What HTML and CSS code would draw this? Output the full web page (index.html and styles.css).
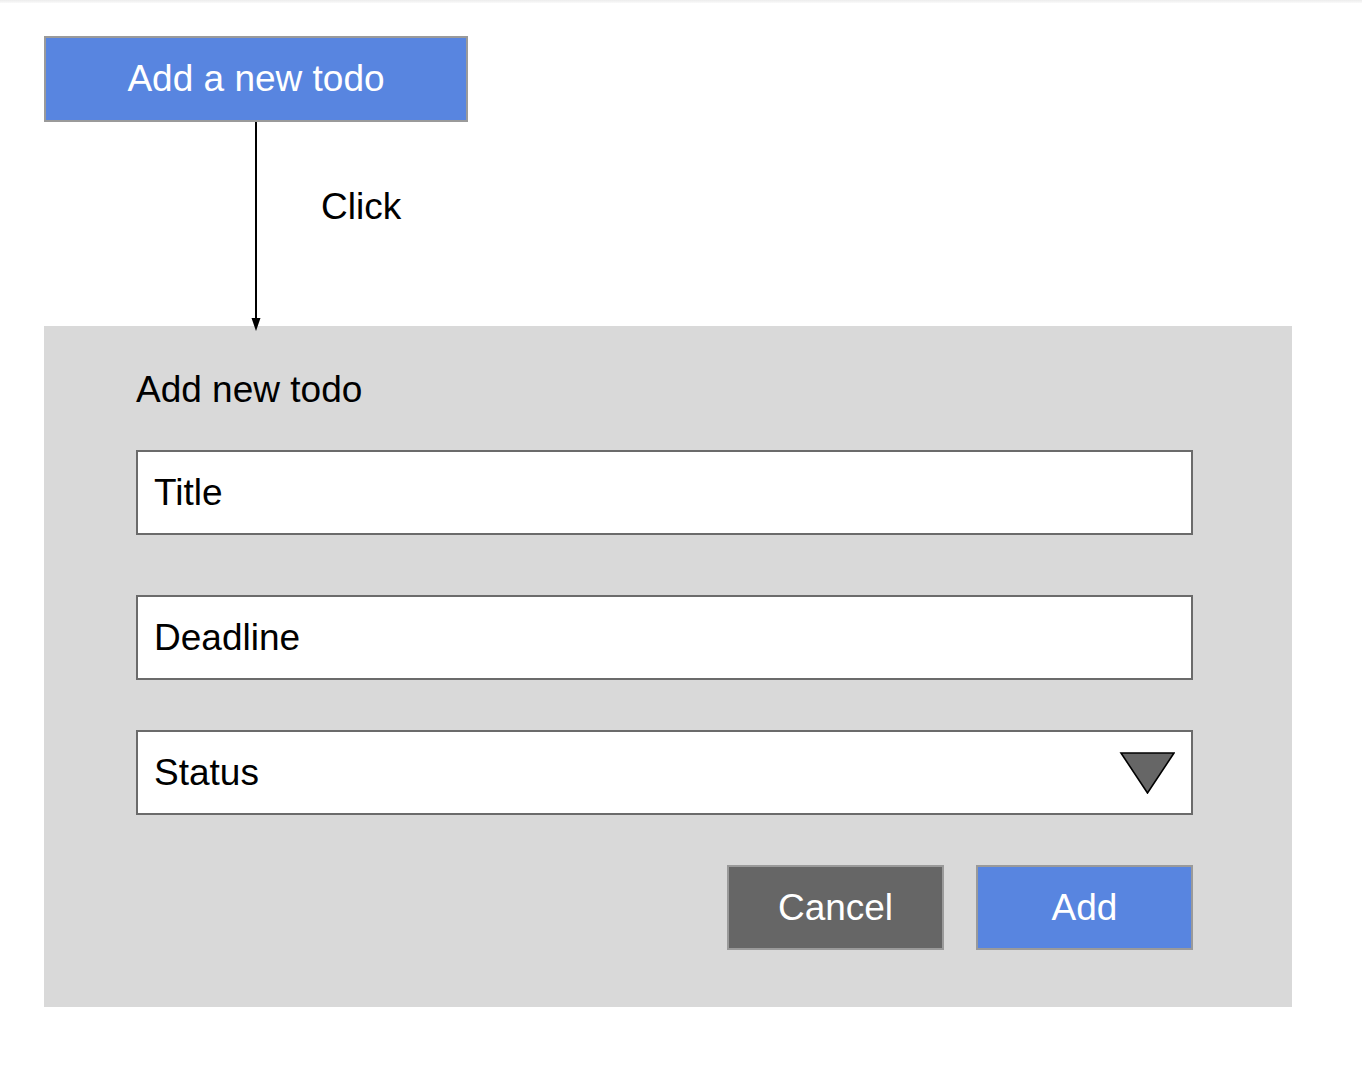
FILE: index.html
```html
<!DOCTYPE html>
<html lang="en">
<head>
<meta charset="utf-8">
<title>Add a new todo</title>
<link rel="stylesheet" href="styles.css">
</head>
<body>
<div class="fade"></div>
<main class="canvas">
  <div class="start-btn">Add a new todo</div>
  <div class="connector">
    <svg class="arrow" width="20" height="209" viewBox="0 0 20 209" aria-hidden="true">
      <line x1="10" y1="0" x2="10" y2="198" stroke="#000" stroke-width="2"/>
      <polygon points="5.5,196 14.5,196 10,209" fill="#000"/>
    </svg>
    <span class="click-label">Click</span>
  </div>
  <section class="panel">
    <h1 class="panel-title">Add new todo</h1>
    <div class="field field-title">Title</div>
    <div class="field field-deadline">Deadline</div>
    <div class="field field-status">
      <span>Status</span>
      <svg class="caret" width="56" height="42" viewBox="0 0 56 42" aria-hidden="true">
        <polygon points="2,1 55,1 28.5,41" fill="#666666" stroke="#000" stroke-width="1.6" stroke-linejoin="miter"/>
      </svg>
    </div>
    <div class="actions">
      <div class="btn btn-cancel">Cancel</div>
      <div class="btn btn-add">Add</div>
    </div>
  </section>
</main>
</body>
</html>
```
FILE: styles.css
```css
html, body {
  margin: 0;
  padding: 0;
  background: #ffffff;
}

body {
  font-family: "Liberation Sans", Arial, sans-serif;
  font-size: 37px;
  line-height: 42px;
  color: #000;
}

.fade {
  height: 3px;
  background: linear-gradient(#ececec, #fafafa);
}

.canvas {
  padding: 33px 0 0 44px;
}

.start-btn {
  box-sizing: border-box;
  width: 424px;
  height: 86px;
  border: 2px solid #9a9a9a;
  background: #5885e0;
  color: #fff;
  display: flex;
  align-items: center;
  justify-content: center;
}

.connector {
  height: 204px;
  display: flex;
  align-items: flex-start;
}

.arrow {
  display: block;
  margin-left: 202px;
  position: relative;
  z-index: 1;
  overflow: visible;
}

.click-label {
  margin-left: 55px;
  margin-top: 64px;
}

.panel {
  box-sizing: border-box;
  width: 1248px;
  height: 681px;
  background: #d9d9d9;
  padding: 43px 0 0 92px;
  display: flex;
  flex-direction: column;
}

.panel-title {
  margin: 0;
  font-size: 37px;
  font-weight: normal;
  line-height: 42px;
}

.field {
  box-sizing: border-box;
  width: 1057px;
  height: 85px;
  border: 2px solid #6b6b6b;
  background: #fff;
  padding: 0 16px 0 16px;
  display: flex;
  align-items: center;
  justify-content: space-between;
}

.field-title {
  margin-top: 39px;
}

.field-deadline {
  margin-top: 60px;
}

.field-status {
  margin-top: 50px;
}

.caret {
  display: block;
}

.actions {
  width: 1057px;
  margin-top: 50px;
  display: flex;
  justify-content: flex-end;
  gap: 32px;
}

.btn {
  box-sizing: border-box;
  width: 217px;
  height: 85px;
  border: 2px solid #9a9a9a;
  color: #fff;
  display: flex;
  align-items: center;
  justify-content: center;
}

.btn-cancel {
  background: #666666;
}

.btn-add {
  background: #5885e0;
}
```
